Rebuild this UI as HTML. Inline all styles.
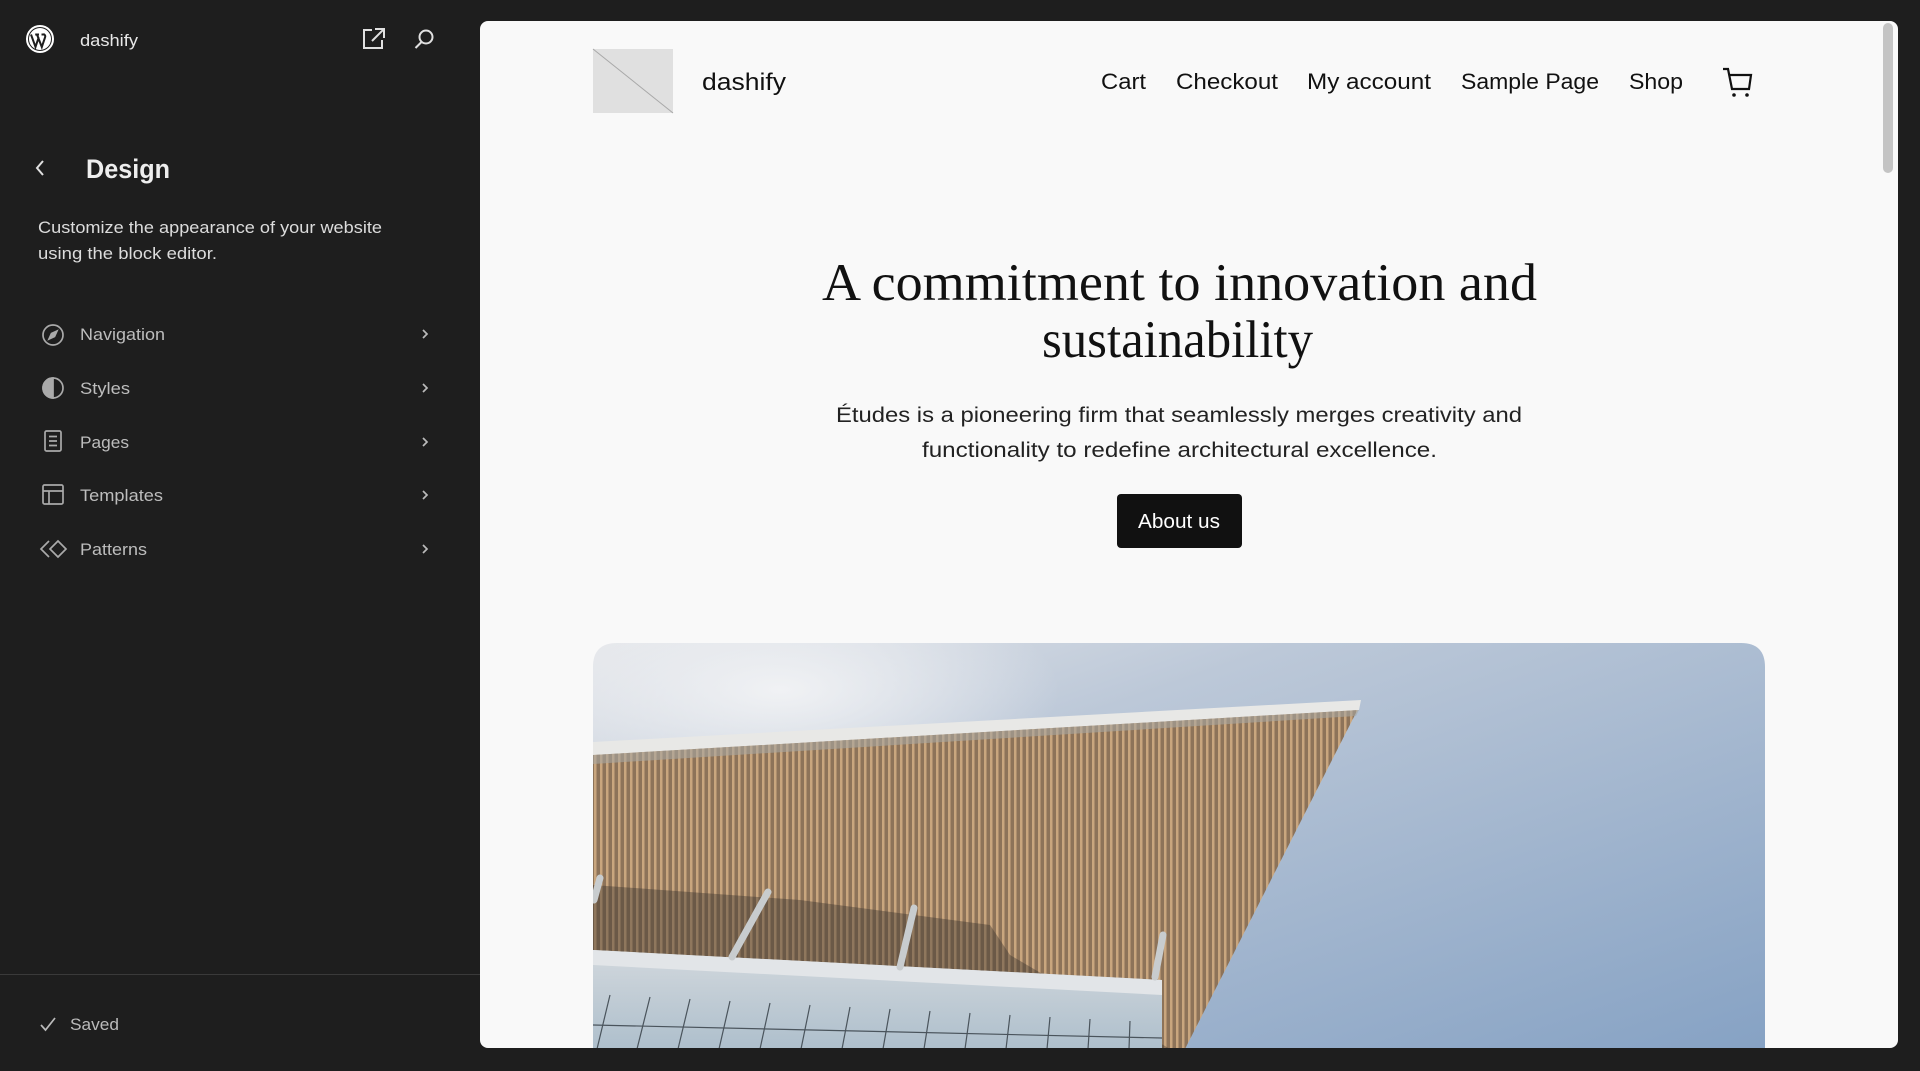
<!DOCTYPE html>
<html><head><meta charset="utf-8">
<style>
*{margin:0;padding:0;box-sizing:border-box}
html,body{width:1920px;height:1071px;overflow:hidden;background:#1e1e1e;font-family:"Liberation Sans",sans-serif}
.abs{position:absolute}
#frame{position:absolute;left:480px;top:21px;width:1418px;height:1027px;background:#f9f9f9;border-radius:8px;overflow:hidden}
</style></head><body>

<svg class="abs" style="left:0;top:0" width="480" height="1071" viewBox="0 0 480 1071">
 <!-- WP logo -->
 <g transform="translate(26,25)">
  <circle cx="14" cy="14" r="13" fill="none" stroke="#fff" stroke-width="2"/>
  <circle cx="14" cy="14" r="11" fill="#fff"/>
  <path d="M5 9.5 L9.5 22 L12.5 13 L10.8 9.5 M9.2 9.5 H13 M11 9.5 L15.8 22 L19 12.5 C19.8 10.5 18.5 9 17 9.5 M15.5 9.5 H19" fill="none" stroke="#1e1e1e" stroke-width="2"/>
 </g>
 <text x="80" y="46" font-family="Liberation Sans" font-size="17" fill="#e8e8e8" textLength="58" lengthAdjust="spacingAndGlyphs">dashify</text>
 <g fill="none" stroke="#e0e0e0" stroke-width="2">
  <path d="M372 30 H364 V48 H382 V40"/><path d="M375 29 H384 V38 M384 29 L372 41"/>
  <circle cx="426" cy="37" r="6.5"/><path d="M421.5 42 L415.5 48"/>
  <path d="M43 161 L37 168 L43 175"/>
 </g>
 <text x="86" y="178" font-family="Liberation Sans" font-size="27" font-weight="bold" fill="#eee" textLength="84" lengthAdjust="spacingAndGlyphs">Design</text>
 <g font-family="Liberation Sans" font-size="17" fill="#dcdcdc">
  <text x="38" y="233" textLength="344" lengthAdjust="spacingAndGlyphs">Customize the appearance of your website</text>
  <text x="38" y="259" textLength="179" lengthAdjust="spacingAndGlyphs">using the block editor.</text>
 </g>
 <!-- icons -->
 <g fill="none" stroke="#aaa" stroke-width="1.7">
  <circle cx="53" cy="335" r="10"/><path d="M57 331 L51.5 333.5 L49 339 L54.5 336.5 Z" fill="#aaa"/>
  <circle cx="53" cy="388" r="10"/><path d="M53 378 A10 10 0 0 0 53 398 Z" fill="#aaa"/>
  <rect x="45" y="431" width="16" height="20" rx="1.5"/><path d="M49 436.5 H57 M49 441 H57 M49 445.5 H57"/>
  <rect x="43" y="485" width="20" height="19" rx="1.5"/><path d="M43 491 H63 M49 491 V504"/>
  <path d="M49 541 L41 549 L49 557"/><path d="M58 541 L66 549 L58 557 L50 549 Z"/>
 </g>
 <g font-family="Liberation Sans" font-size="17" fill="#bdbdbd">
  <text x="80" y="340" textLength="85" lengthAdjust="spacingAndGlyphs">Navigation</text>
  <text x="80" y="394" textLength="50" lengthAdjust="spacingAndGlyphs">Styles</text>
  <text x="80" y="448" textLength="49" lengthAdjust="spacingAndGlyphs">Pages</text>
  <text x="80" y="501" textLength="83" lengthAdjust="spacingAndGlyphs">Templates</text>
  <text x="80" y="555" textLength="67" lengthAdjust="spacingAndGlyphs">Patterns</text>
 </g>
 <g fill="none" stroke="#bbb" stroke-width="1.7">
  <path d="M423 330 L427 334 L423 338"/>
  <path d="M423 384 L427 388 L423 392"/>
  <path d="M423 438 L427 442 L423 446"/>
  <path d="M423 491 L427 495 L423 499"/>
  <path d="M423 545 L427 549 L423 553"/>
  <path d="M41 1025 L45.5 1030 L55 1018"/>
 </g>
 <rect x="0" y="974" width="480" height="1" fill="#3a3a3a"/>
 <text x="70" y="1030" font-family="Liberation Sans" font-size="17" fill="#bbb" textLength="49" lengthAdjust="spacingAndGlyphs">Saved</text>
</svg>

<div id="frame">
 <svg width="1418" height="1027" viewBox="480 21 1418 1027" style="position:absolute;left:0;top:0">
  <defs>
   <linearGradient id="sky" x1="0" y1="0" x2="1" y2="1">
    <stop offset="0" stop-color="#e4e6ea"/><stop offset="0.3" stop-color="#bcc8d8"/><stop offset="1" stop-color="#86a2c4"/>
   </linearGradient>
   <radialGradient id="cloud" cx="0.5" cy="0.5" r="0.5">
    <stop offset="0" stop-color="#f2f3f5" stop-opacity="0.95"/><stop offset="1" stop-color="#f2f3f5" stop-opacity="0"/>
   </radialGradient>
   <pattern id="slats" width="6" height="10" patternUnits="userSpaceOnUse">
    <rect width="6" height="10" fill="#8d7359"/><rect width="2.5" height="10" fill="#c9a67e"/>
   </pattern>
   <linearGradient id="glass" x1="0" y1="0" x2="0" y2="1"><stop offset="0" stop-color="#d2d8dd"/><stop offset="1" stop-color="#aebfcc"/></linearGradient>
   <clipPath id="imgclip"><path d="M593 667 Q593 643 617 643 H1741 Q1765 643 1765 667 V1048 H593 Z"/></clipPath>
  </defs>
  <rect x="593" y="49" width="80" height="64" fill="#e0e0e0"/>
  <line x1="593" y1="49" x2="673" y2="113" stroke="#a8a8a8" stroke-width="1"/>
  <text x="702" y="90" font-family="Liberation Sans" font-size="24" fill="#111" textLength="84" lengthAdjust="spacingAndGlyphs">dashify</text>
  <g font-family="Liberation Sans" font-size="22" fill="#111">
   <text x="1101" y="89" textLength="45" lengthAdjust="spacingAndGlyphs">Cart</text>
   <text x="1176" y="89" textLength="102" lengthAdjust="spacingAndGlyphs">Checkout</text>
   <text x="1307" y="89" textLength="124" lengthAdjust="spacingAndGlyphs">My account</text>
   <text x="1461" y="89" textLength="138" lengthAdjust="spacingAndGlyphs">Sample Page</text>
   <text x="1629" y="89" textLength="54" lengthAdjust="spacingAndGlyphs">Shop</text>
  </g>
  <path d="M1723 69 H1728 L1732 89 H1749 L1751 75 H1729" fill="none" stroke="#111" stroke-width="2.2"/>
  <circle cx="1734" cy="95" r="1.8" fill="#111"/><circle cx="1747" cy="95" r="1.8" fill="#111"/>
  <rect x="1883" y="23" width="10" height="150" rx="5" fill="#c4c4c4"/>
  <g font-family="Liberation Serif" font-size="53" fill="#111">
   <text x="822" y="300" textLength="715" lengthAdjust="spacingAndGlyphs">A commitment to innovation and</text>
   <text x="1042" y="357" textLength="271" lengthAdjust="spacingAndGlyphs">sustainability</text>
  </g>
  <g font-family="Liberation Sans" font-size="21" fill="#222">
   <text x="836" y="422" textLength="686" lengthAdjust="spacingAndGlyphs">Études is a pioneering firm that seamlessly merges creativity and</text>
   <text x="922" y="457" textLength="515" lengthAdjust="spacingAndGlyphs">functionality to redefine architectural excellence.</text>
  </g>
  <rect x="1117" y="494" width="125" height="54" rx="4" fill="#111"/>
  <text x="1138" y="528" font-family="Liberation Sans" font-size="20" fill="#fff" textLength="82" lengthAdjust="spacingAndGlyphs">About us</text>
  <g clip-path="url(#imgclip)">
   <rect x="593" y="643" width="1172" height="406" fill="url(#sky)"/>
   <ellipse cx="780" cy="690" rx="280" ry="110" fill="url(#cloud)"/>
   <path d="M593 750 L1359 707 L1185 1049 L593 1049 Z" fill="url(#slats)"/>
   <path d="M593 742 L1361 700 L1359 710 L593 755 Z" fill="#e8e8e6"/>
   <path d="M593 755 L1359 710 L1356 716 L593 764 Z" fill="#a8a6a2" opacity="0.6"/>
   <path d="M593 885 L800 900 L990 925 L1010 955 L1170 1049 L593 1049 Z" fill="#3a332d" opacity="0.4"/>
   <path d="M593 950 L1162 980 L1162 1049 L593 1049 Z" fill="url(#glass)"/>
   <path d="M593 950 L1162 980 L1162 995 L593 965 Z" fill="#e2e5e8"/>
   <g stroke="#4a545c" stroke-width="1.2">
    <line x1="610" y1="995" x2="597" y2="1049"/><line x1="650" y1="997" x2="637" y2="1049"/>
    <line x1="690" y1="999" x2="678" y2="1049"/><line x1="730" y1="1001" x2="719" y2="1049"/>
    <line x1="770" y1="1003" x2="760" y2="1049"/><line x1="810" y1="1005" x2="801" y2="1049"/>
    <line x1="850" y1="1007" x2="842" y2="1049"/><line x1="890" y1="1009" x2="883" y2="1049"/>
    <line x1="930" y1="1011" x2="924" y2="1049"/><line x1="970" y1="1013" x2="965" y2="1049"/>
    <line x1="1010" y1="1015" x2="1006" y2="1049"/><line x1="1050" y1="1017" x2="1047" y2="1049"/>
    <line x1="1090" y1="1019" x2="1088" y2="1049"/><line x1="1130" y1="1021" x2="1129" y2="1049"/>
    <line x1="593" y1="1025" x2="1162" y2="1038"/>
   </g>
   <g stroke="#c8ccce" stroke-width="7" stroke-linecap="round">
    <line x1="600" y1="878" x2="594" y2="900"/>
    <line x1="768" y1="892" x2="732" y2="957"/>
    <line x1="914" y1="908" x2="900" y2="967"/>
    <line x1="1163" y1="935" x2="1155" y2="977"/>
   </g>
  </g>
 </svg>
</div>
</body></html>
